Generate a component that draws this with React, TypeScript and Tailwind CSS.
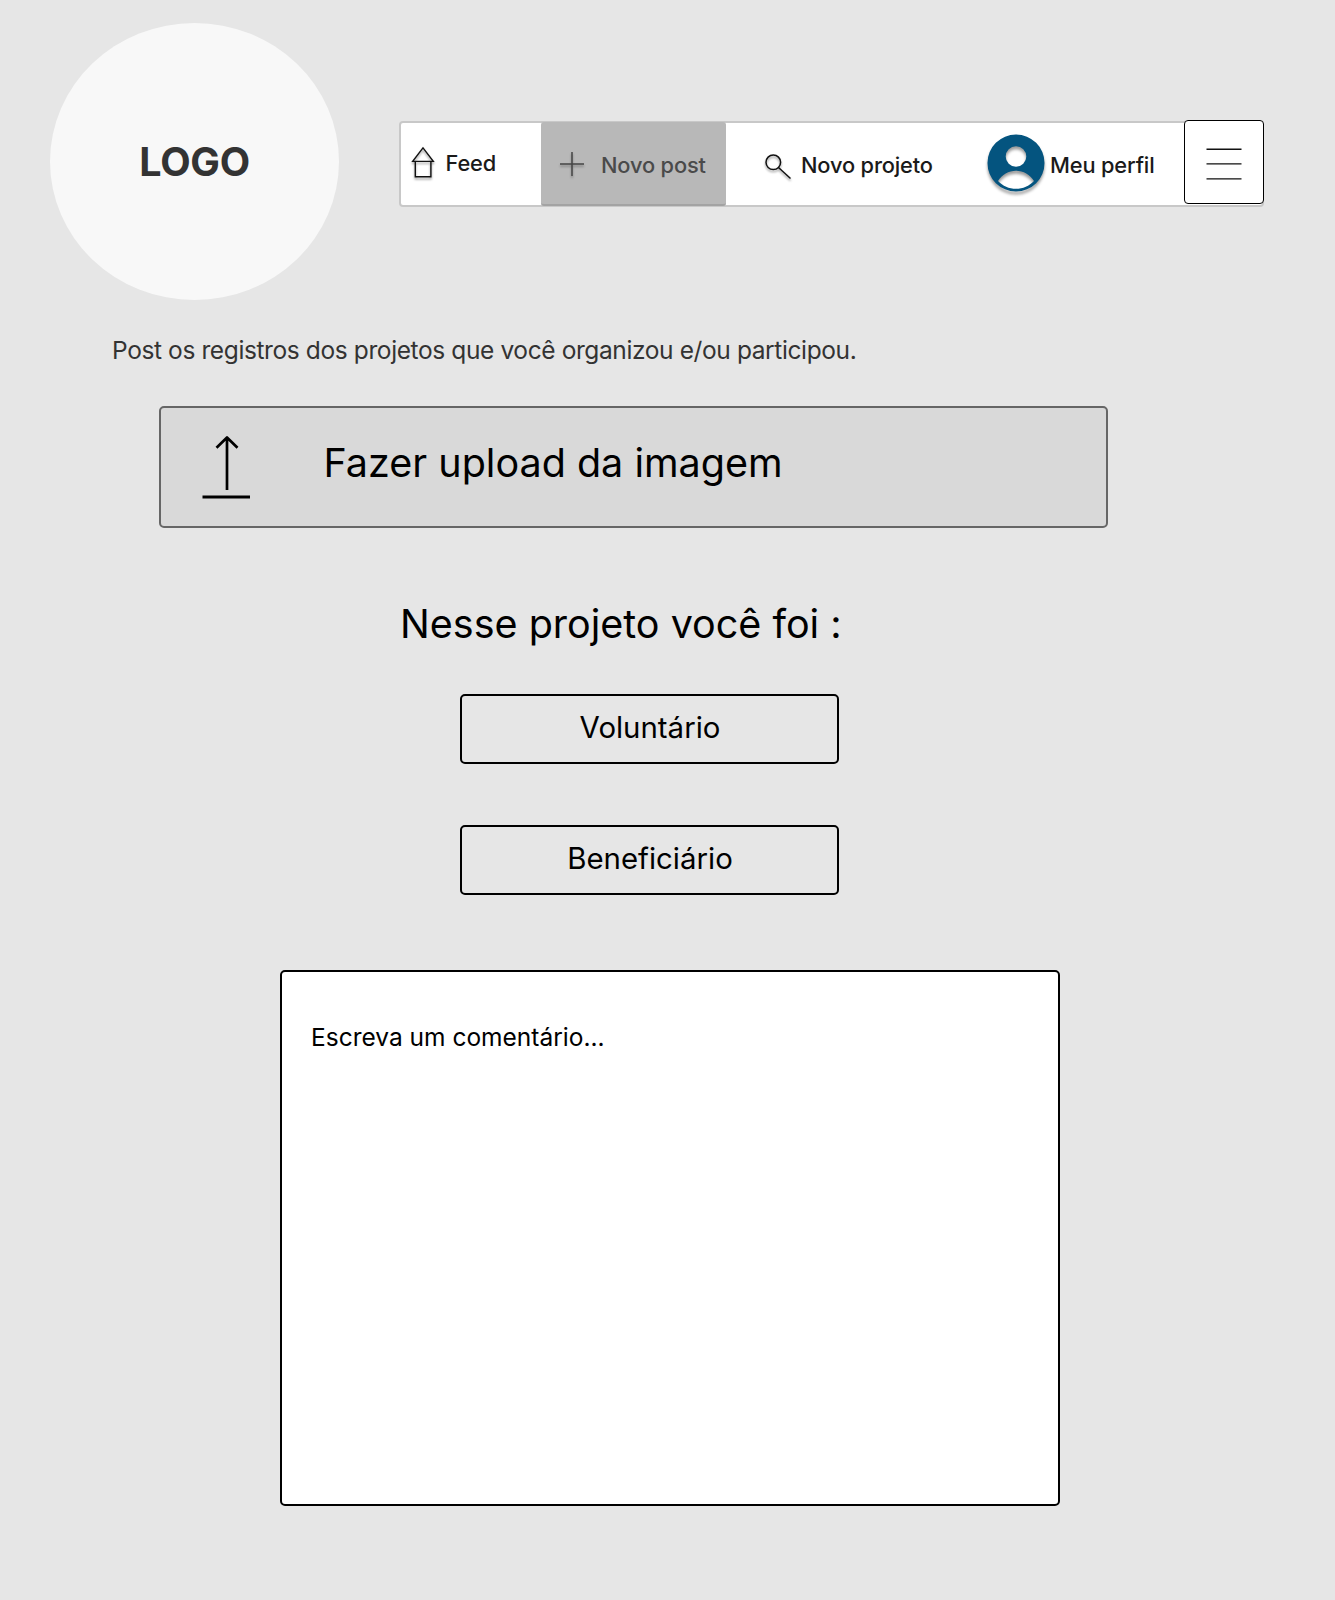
import React from "react";

function HomeIcon() {
  return (
    <svg width="26" height="36" viewBox="0 0 26 36" fill="none" stroke="#111" strokeWidth="1.4" className="mb-[2px] shrink-0 drop-shadow-[0_2px_1px_rgba(0,0,0,0.4)]">
      <path d="M13 2.8 L23.3 16.4 H2.7 Z" />
      <path d="M5.3 16.4 V31.8 H20.9 V16.4" />
    </svg>
  );
}

function PlusIcon() {
  return (
    <svg width="26" height="28" viewBox="0 0 26 28" fill="none" stroke="#444" strokeWidth="1.5" className="mt-[2px] shrink-0 drop-shadow-[0_2px_1px_rgba(0,0,0,0.3)]">
      <path d="M13 2 V26 M1 14 H25" />
    </svg>
  );
}

function SearchIcon() {
  return (
    <svg width="28" height="28" viewBox="0 0 28 28" fill="none" stroke="#111" strokeWidth="1.5" className="mt-[6px] shrink-0 drop-shadow-[0_2px_1px_rgba(0,0,0,0.4)]">
      <circle cx="9.3" cy="9.3" r="7.3" />
      <path d="M14.5 14.5 L26.5 25.5" />
    </svg>
  );
}

function ProfileIcon() {
  return (
    <svg width="58" height="58" viewBox="0 0 58 58" className="mb-[2px] ml-px shrink-0 drop-shadow-[0_3px_1.5px_rgba(0,0,0,0.4)]">
      <path
        fill="#04547f"
        fillRule="evenodd"
        d="M29 .5a28.5 28.5 0 1 0 0 57a28.5 28.5 0 1 0 0-57ZM29 12.200a10.300 10.300 0 1 1 0 20.600a10.300 10.300 0 1 1 0-20.600ZM11 47C15 40.600 21.600 36.800 29 36.800s14 3.800 18 10.200C42.200 52 36 54.800 29 54.800s-13.200-2.800-18-7.800Z"
      />
    </svg>
  );
}

function MenuIcon() {
  return (
    <svg width="36" height="32" viewBox="0 0 36 32" fill="none" stroke="#111" strokeWidth="1.4">
      <path d="M0.500 1.300 H35.500 M0.500 15.900 H35.500 M0.500 30.900 H35.500" />
    </svg>
  );
}

function UploadIcon() {
  return (
    <svg width="48" height="64" viewBox="0 0 48 64" fill="none" stroke="#000" strokeWidth="2.7" className="mt-px shrink-0">
      <path d="M25 54 V1.300 M14.500 11.700 L25 1.500 L35.500 11.700" strokeLinejoin="round" />
      <path d="M0.500 61 H48" strokeWidth="3" />
    </svg>
  );
}

function RoleButton({ children }: { children: React.ReactNode }) {
  return (
    <button className="flex h-[70px] w-[379px] items-center justify-center rounded-[5px] border-2 border-black pb-[2px] pl-px text-[29.4px] leading-none">
      {children}
    </button>
  );
}

export default function App() {
  return (
    <main className="flex h-[1600px] w-[1335px] flex-col overflow-hidden bg-[#e6e6e6] font-['Inter',sans-serif] text-black">
      <header className="flex pl-[50px] pt-[23px]">
        <div className="flex h-[277px] w-[289px] items-center justify-center rounded-[50%] bg-[#f8f8f8] pt-[2px] text-[39.5px] font-bold leading-none tracking-[-0.3px] text-[#333]">
          <span>LOGO</span>
        </div>
        <nav className="ml-[60px] mt-[98px] flex h-[86px] w-[865px] rounded-[4px] border-2 border-[#c8c8c8] bg-white text-[21.8px] font-medium leading-none tracking-[-0.15px] text-[#1a1a1a]">
          <a className="flex w-[140px] items-center pl-[9px]">
            <HomeIcon />
            <span className="ml-[9.5px]">Feed</span>
          </a>
          <a className="-my-px flex w-[185px] items-center rounded-[3px] border-b-2 border-[#a3a3a3] bg-[#b8b8b8] pl-[18px] text-[#4a4a4a]">
            <PlusIcon />
            <span className="ml-[16px] mt-[5px]">Novo post</span>
          </a>
          <a className="flex w-[260px] items-center pl-[38px]">
            <SearchIcon />
            <span className="ml-[9px] mt-[4px]">Novo projeto</span>
          </a>
          <a className="flex flex-1 items-center">
            <ProfileIcon />
            <span className="ml-[5px] mt-[4px]">Meu perfil</span>
          </a>
          <button className="-mr-[2px] -mt-[3px] flex h-[84px] w-[80px] items-center justify-center rounded-[4px] border-[1.5px] border-black bg-white pt-[4px]">
            <MenuIcon />
          </button>
        </nav>
      </header>
      <p className="ml-[112px] mt-[37px] whitespace-nowrap text-[24.5px] leading-[26px] tracking-[-0.39px] text-[#333]">
        Post os registros dos projetos que você organizou e/ou participou.
      </p>
      <button className="ml-[159px] mt-[43px] flex h-[122px] w-[949px] items-center rounded-[5px] border-2 border-[#666] bg-[#d9d9d9] pl-[41px] text-[39.5px] leading-none">
        <UploadIcon />
        <span className="mb-[6px] ml-[73.5px]">Fazer upload da imagem</span>
      </button>
      <h1 className="ml-[400px] mt-[76px] whitespace-nowrap text-[39.5px] leading-[40px]">Nesse projeto você foi :</h1>
      <div className="ml-[460px] mt-[50px] flex flex-col gap-[61px]">
        <RoleButton>Voluntário</RoleButton>
        <RoleButton>Beneficiário</RoleButton>
      </div>
      <textarea
        className="ml-[280px] mt-[75px] h-[536px] w-[780px] resize-none rounded-[5px] border-2 border-black bg-white pl-[29px] pt-[50px] text-[24.5px] leading-[30px] outline-none placeholder:text-black placeholder:opacity-100"
        placeholder="Escreva um comentário..."
      />
    </main>
  );
}
